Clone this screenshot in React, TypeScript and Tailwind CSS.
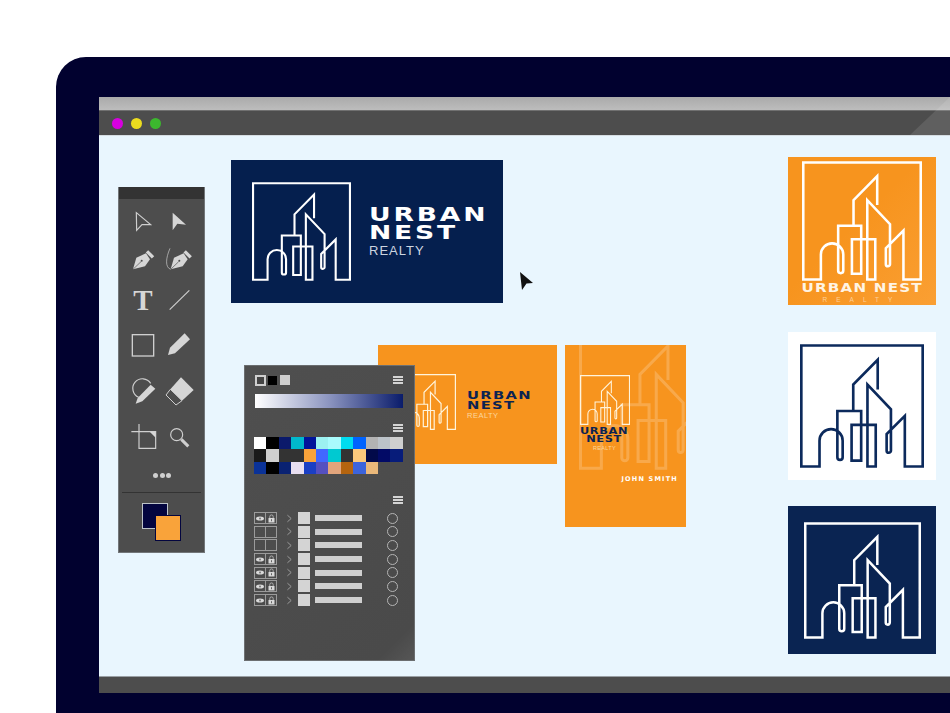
import React from 'react';

const swatches = [
  ['#ffffff', '#000000', '#0b1a6b', '#00b8cc', '#02149a', '#9cf1f1', '#a9fbfd', '#00dcf0', '#0063ff', '#b3b3b3', '#bcc3c9', '#cfcfcf'],
  ['#1a1a1a', '#cfcfcf', '#333333', '#333333', '#f9a33a', '#4167ff', '#00c9d1', '#333333', '#fbc97c', '#020a4a', '#020a66', '#071c7a'],
  ['#0a3298', '#000000', '#0a2272', '#e8def0', '#1b3fc4', '#5550c0', '#e2a57c', '#b4640f', '#3c64dc', '#eab87a'],
];

const layers = [true, false, false, true, true, true, true];

const BuildingLogo: React.FC<{ className: string; stroke: string }> = ({ className, stroke }) => (
  <svg viewBox="-4 -4 375 374" fill="none" stroke={stroke} strokeWidth="8" strokeLinejoin="miter" className={className}>
    <path d="M55 366H0V0H367V366H313V213L258 268V318A6.5 6.5 0 0 0 271 318V193L200 118V366H225V240H152V348H181V198H109V338A8 8 0 0 0 125 338V288A35 35 0 0 0 55 288Z" />
    <path d="M157 198V118L231 43V133" />
  </svg>
);

const Hamburger = () => (
  <div className="flex w-[10px] flex-col gap-[1px]">
    <div className="h-[2px] bg-[#d4d4d4]" />
    <div className="h-[2px] bg-[#d4d4d4]" />
    <div className="h-[2px] bg-[#d4d4d4]" />
  </div>
);

const Icon: React.FC<{ box: string; children: React.ReactNode }> = ({ box, children }) => (
  <svg viewBox={box} className="h-[30px] w-[30px]" fill="none" stroke="#cfcfcf" strokeWidth="3.5">
    {children}
  </svg>
);

const PenShape: React.FC<{ dx?: number }> = ({ dx = 0 }) => (
  <g transform={`translate(${dx} 0)`}>
    <path d="M67 268L77 233L106 220L118 238L103 259Z" fill="#d6d6d6" stroke="none" />
    <path d="M109 214L127 232" stroke="#d6d6d6" strokeWidth="10" />
    <path d="M67 268L91 245" stroke="#4d4d4d" strokeWidth="2" />
    <circle cx="93" cy="242" r="3" fill="#4d4d4d" stroke="none" />
  </g>
);

const Toolbar = () => (
  <div className="absolute left-[19px] top-[51px] h-[366px] w-[87px] border-x border-b border-[#aab4bc]/40 bg-[#4d4d4d]">
    <div className="h-[12px] bg-[#333333]" />
    <div className="grid grid-cols-[48px_24px] grid-rows-[44px_34px_46px_44px_48px_44px] items-center justify-items-center">
      <Icon box="50 77 90 90">
        <path d="M75 97L118 133L92 133L76 150Z" />
      </Icon>
      <Icon box="160 77 90 90">
        <path d="M186 97L226 133L200 130L186 150Z" fill="#d6d6d6" stroke="none" />
      </Icon>
      <Icon box="52 195 90 90">
        <PenShape />
      </Icon>
      <Icon box="160 195 90 90">
        <PenShape dx={113} />
        <path d="M178 205C165 235 163 262 180 268" strokeWidth="2" />
      </Icon>
      <span className="font-['Liberation_Serif'] text-[29px] font-bold leading-none text-[#d6d6d6]">T</span>
      <Icon box="160 317 90 90">
        <path d="M177 391L236 333" />
      </Icon>
      <Icon box="52 452 90 90">
        <rect x="65" y="466" width="64" height="64" strokeWidth="4" />
      </Icon>
      <Icon box="160 452 90 90">
        <path d="M172 527L178 505L222 462L238 480L193 522Z" fill="#d6d6d6" stroke="none" />
      </Icon>
      <Icon box="50 18 90 90">
        <path d="M82 82A29 29 0 1 1 118 40" />
        <path d="M73 101L79 84L118 44L132 56L93 94Z" fill="#d6d6d6" stroke="none" />
      </Icon>
      <Icon box="159 18 90 90">
        <path d="M210 22L248 60L213 92L178 58Z" fill="#d6d6d6" stroke="none" />
        <path d="M178 58L213 92L195 105L165 75Z" strokeWidth="3" />
      </Icon>
      <Icon box="50 156 90 90">
        <path d="M60 185H133V235H83V162" />
        <path d="M115 185H133V203Z" fill="#d6d6d6" stroke="none" />
      </Icon>
      <Icon box="159 156 90 90">
        <circle cx="197" cy="194" r="18" />
        <path d="M211 208L232 229" strokeWidth="9" />
      </Icon>
    </div>
    <div className="flex h-[33px] items-center justify-center gap-[1.5px] pl-[1px]">
      <div className="h-[5px] w-[5px] rounded-full bg-[#cfcfcf]" />
      <div className="h-[5px] w-[5px] rounded-full bg-[#cfcfcf]" />
      <div className="h-[5px] w-[5px] rounded-full bg-[#cfcfcf]" />
    </div>
    <div className="mx-[3px] h-[1px] bg-[#333333]" />
    <div className="relative h-[49px]">
      <div className="absolute left-[23px] top-[10px] h-[26px] w-[26px] border border-[#bcc3c9] bg-[#03053f]" />
      <div className="absolute left-[36px] top-[22px] h-[26px] w-[26px] border border-[#03053f] bg-[#f9a33a]" />
    </div>
  </div>
);

const LayerRow: React.FC<{ on: boolean }> = ({ on }) => (
  <div className="flex h-[13.7px] items-center">
    <div className="flex h-[12px] w-[23px] border border-[#9b9b9b]">
      <div className="flex w-[11px] items-center justify-center border-r border-[#9b9b9b]">
        {on && (
          <svg viewBox="0 0 8 5" className="h-[5px] w-[8px]">
            <ellipse cx="4" cy="2.5" rx="4" ry="2" fill="#d9d9d9" />
            <circle cx="4" cy="2.5" r="1" fill="#777777" />
          </svg>
        )}
      </div>
      <div className="flex flex-1 items-center justify-center">
        {on && (
          <svg viewBox="0 0 7 9" className="h-[9px] w-[7px]">
            <path d="M1.8 4V2.6A1.7 1.7 0 0 1 5.2 2.6V4" fill="none" stroke="#c4c4c4" strokeWidth="0.8" />
            <rect x="0.5" y="4" width="6" height="4.5" fill="#d9d9d9" />
            <rect x="3" y="5.2" width="1" height="2" fill="#666666" />
          </svg>
        )}
      </div>
    </div>
    <svg viewBox="0 0 6 9" fill="none" stroke="#a8a8a8" strokeWidth="1" className="ml-[10px] h-[9px] w-[5px]">
      <path d="M0.5 0.5L5 4.5L0.5 8.5" />
    </svg>
    <div className="ml-[6px] h-[12px] w-[12px] bg-[#d4d4d4]" />
    <div className="ml-[5px] h-[6px] w-[47px] bg-[#cfcfcf]" />
    <div className="ml-[25px] h-[11px] w-[11px] rounded-full border border-[#b4b4b4]" />
  </div>
);

const SwatchPanel = () => (
  <div className="absolute left-[145px] top-[229px] h-[296px] w-[171px] border border-[#8a8f94]/50 bg-[linear-gradient(135deg,#4f4f4f_0%,#4a4a4a_92%,#565656_100%)] pl-[9px] pr-[11px]">
    <div className="flex h-[28px] items-center justify-between">
      <div className="flex items-center gap-[2px] pl-[1px]">
        <div className="h-[11px] w-[11px] border-2 border-[#cfcfcf] bg-[#444444]" />
        <div className="h-[9px] w-[9px] bg-[#000000]" />
        <div className="ml-[1px] h-[10px] w-[10px] bg-[#cfcfcf]" />
      </div>
      <Hamburger />
    </div>
    <div className="ml-[1px] h-[14px] bg-[linear-gradient(90deg,#ffffff_0%,#8c95c0_50%,#0a1c6b_100%)]" />
    <div className="mt-[16px] flex justify-end">
      <Hamburger />
    </div>
    <div className="mt-[5px] flex flex-col">
      {swatches.map((row, i) => (
        <div key={i} className="flex">
          {row.map((c, j) => (
            <div key={j} className="h-[12.4px] w-[12.4px]" style={{ backgroundColor: c }} />
          ))}
        </div>
      ))}
    </div>
    <div className="mt-[22px] flex justify-end">
      <Hamburger />
    </div>
    <div className="mt-[7px] flex flex-col">
      {layers.map((on, i) => (
        <LayerRow key={i} on={on} />
      ))}
    </div>
  </div>
);

const wide = "font-['DejaVu_Sans'] font-bold whitespace-nowrap";
const thin = "font-['Liberation_Sans'] whitespace-nowrap";

export default function App() {
  return (
    <div className="h-[713px] w-[950px] overflow-hidden bg-white pl-[56px] pt-[57px]">
      <div className="flex h-[656px] flex-col overflow-hidden rounded-tl-[30px] bg-[#01012f] pb-[20px] pl-[43px] pt-[40px]">
        <div className="relative flex flex-1 flex-col overflow-hidden">
          <div className="h-[13px] bg-[linear-gradient(180deg,#aaaaaa,#bdbdbd)]" />
          <div className="flex h-[25px] items-center gap-[8px] border-t border-[#707070] bg-[#4d4d4d] pl-[13px]">
            <div className="h-[11px] w-[11px] rounded-full bg-[#d800e0]" />
            <div className="h-[11px] w-[11px] rounded-full bg-[#ecdc1f]" />
            <div className="h-[11px] w-[11px] rounded-full bg-[#3cb82e]" />
          </div>

          <div className="relative flex-1 overflow-hidden border-t border-[#d6dde2] bg-[#e9f6fe]">
            {/* horizontal logo, navy */}
            <div className="absolute left-[132px] top-[24px] flex h-[143px] w-[272px] items-start gap-[18px] bg-[#051f4e] pl-[21px] pt-[22px]">
              <BuildingLogo className="h-[99px] w-[99px]" stroke="#ffffff" />
              <div className="pt-[23px] text-white">
                <div className={`${wide} origin-left scale-x-[1.4] text-[19px] leading-[18px] tracking-[2px]`}>
                  URBAN
                  <br />
                  NEST
                </div>
                <div className={`${thin} mt-[3px] text-[13px] leading-[13px] tracking-[1px] text-[#cdd5e0]`}>REALTY</div>
              </div>
            </div>

            {/* mouse cursor */}
            <svg viewBox="0 0 14 18" className="absolute left-[420px] top-[136px] h-[18px] w-[14px]">
              <path d="M1 0L14 11L7.5 11.5L3 18Z" fill="#111111" />
            </svg>

            {/* business card front */}
            <div className="absolute left-[279px] top-[209px] flex h-[119px] w-[179px] items-start gap-[11px] bg-[#f7941e] pl-[22px] pt-[29px]">
              <BuildingLogo className="h-[56px] w-[56px]" stroke="#fff4dc" />
              <div className="pt-[17px]">
                <div className={`${wide} origin-left scale-x-[1.34] text-[11px] leading-[10px] tracking-[1px] text-[#0b2352]`}>
                  URBAN
                  <br />
                  NEST
                </div>
                <div className={`${thin} mt-[1px] text-[7.5px] leading-[8px] tracking-[0.5px] text-[#fcd79f]`}>REALTY</div>
              </div>
            </div>

            {/* business card back */}
            <div className="absolute left-[466px] top-[209px] h-[182px] w-[121px] overflow-hidden bg-[#f7941e]">
              <BuildingLogo className="absolute left-[14px] top-[-17px] h-[142px] w-[142px] opacity-20" stroke="#ffffff" />
              <div className="relative flex w-[79px] flex-col items-center pt-[30px]">
                <BuildingLogo className="h-[50px] w-[50px]" stroke="#fff4dc" />
                <div className={`${wide} mt-[2px] scale-x-[1.2] text-center text-[9.5px] leading-[8px] tracking-[0.5px] text-[#0b2352]`}>
                  URBAN
                  <br />
                  NEST
                </div>
                <div className={`${thin} mt-[2px] text-[5.5px] leading-[6px] tracking-[0.3px] text-[#fcd79f]`}>REALTY</div>
              </div>
              <div className={`${wide} absolute right-[8px] top-[130px] text-[6.5px] leading-[8px] tracking-[1.2px] text-white`}>JOHN SMITH</div>
            </div>

            <SwatchPanel />
            <Toolbar />

            {/* logo variations column */}
            <div className="absolute left-[689px] top-[21px] flex w-[148px] flex-col">
              <div className="flex h-[148px] flex-col items-center bg-[linear-gradient(135deg,#f7941e_0%,#f7941e_45%,#fa9f33_100%)] pt-[4px]">
                <BuildingLogo className="h-[120px] w-[120px]" stroke="#ffffff" />
                <div className={`${wide} mt-[1px] scale-x-[1.21] text-[12.5px] leading-[12px] tracking-[1px] text-[#fff4e4]`}>URBAN NEST</div>
                <div className={`${thin} mt-[2px] text-[6.5px] leading-[7px] tracking-[9px] text-[#fdd09a]`}>REALTY</div>
              </div>
              <div className="mt-[27px] flex h-[148px] items-center justify-center bg-white">
                <BuildingLogo className="h-[124px] w-[124px]" stroke="#0c2a5c" />
              </div>
              <div className="mt-[26px] flex h-[148px] items-center justify-center bg-[#0a2452]">
                <BuildingLogo className="h-[117px] w-[117px]" stroke="#ffffff" />
              </div>
            </div>
          </div>

          <div className="h-[17px] border-t border-[#9aa0a5] bg-[#4d4d4d]" />

          {/* glare across the window chrome */}
          <div className="absolute right-0 top-0 h-[38px] w-[40px] bg-white/10 [clip-path:polygon(100%_0,100%_100%,0_100%)]" />
        </div>
      </div>
    </div>
  );
}
